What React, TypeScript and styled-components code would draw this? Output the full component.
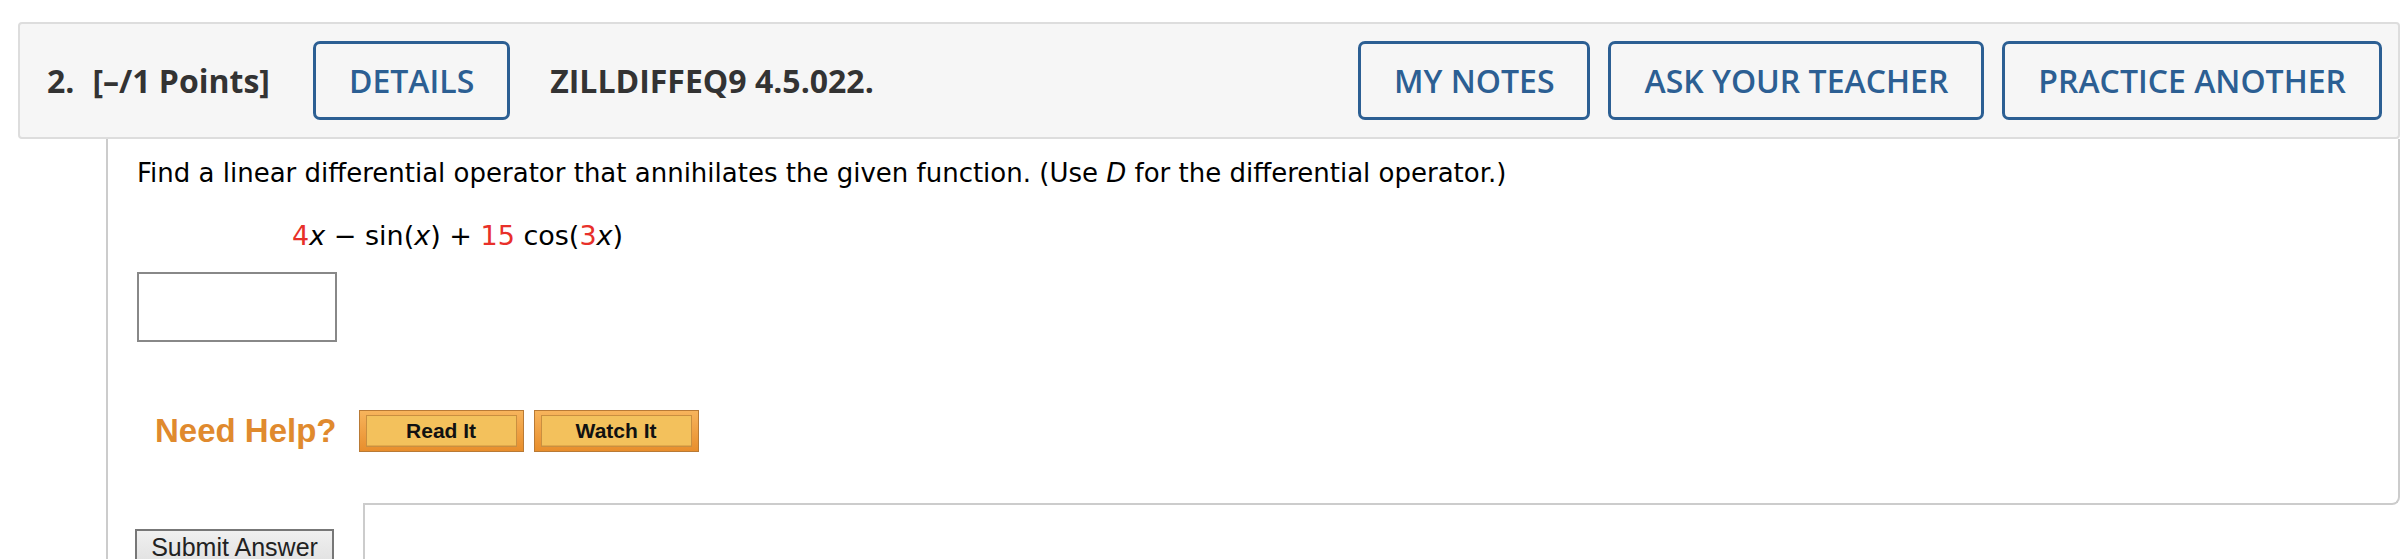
import styled, { createGlobalStyle } from 'styled-components';

const GlobalStyle = createGlobalStyle`
  body {
    margin: 0;
    background: #fff;
  }
`;

const Page = styled.div`
  padding: 22px 8px 0 18px;
  width: 2408px;
  height: 559px;
  box-sizing: border-box;
  overflow: hidden;
`;

const Header = styled.div`
  display: flex;
  align-items: center;
  height: 117px;
  box-sizing: border-box;
  padding: 0 16px 0 27px;
  background: #f6f6f6;
  border: 2px solid #dddddd;
  border-radius: 4px;
  font-family: "Open Sans", sans-serif;
`;

const Label = styled.span<{ $gap?: number }>`
  font-size: 32px;
  font-weight: 700;
  color: #333;
  margin-left: ${(p) => p.$gap ?? 0}px;
  white-space: nowrap;
`;

const OutlineButton = styled.button<{ $gap?: number }>`
  height: 79px;
  box-sizing: border-box;
  padding: 0 33px;
  margin-left: ${(p) => p.$gap ?? 0}px;
  background: transparent;
  border: 3px solid #2c5f93;
  border-radius: 7px;
  color: #2c5f93;
  font-family: "Open Sans", sans-serif;
  font-size: 32px;
  font-weight: 600;
  white-space: nowrap;
`;

const Spacer = styled.div`
  flex: 1;
`;

const Actions = styled.div`
  display: flex;
  gap: 18px;
`;

const Body = styled.div`
  margin-left: 88px;
  border-left: 2px solid #cccccc;
  display: flex;
  flex-direction: column;
`;

const Content = styled.div`
  border-right: 2px solid #cccccc;
  padding: 16px 0 0 29px;
  font-family: "DejaVu Sans", Verdana, sans-serif;
  font-size: 26px;
  color: #000;
`;

const Prompt = styled.p`
  margin: 0;
  line-height: 36px;
`;

const MathLine = styled.p`
  margin: 27px 0 0 155px;
  line-height: 36px;
  font-size: 27px;
`;

const Red = styled.span`
  color: #e8302a;
`;

const AnswerBox = styled.div`
  margin-top: 18px;
  width: 200px;
  height: 70px;
  box-sizing: border-box;
  border: 2px solid #888;
  background: #fff;
`;

const HelpRow = styled.div`
  display: flex;
  align-items: center;
  gap: 10px;
  margin: 68px 0 0 18px;
  padding-bottom: 43px;
`;

const HelpLabel = styled.span`
  font-family: "Liberation Sans", Arial, sans-serif;
  font-size: 33px;
  font-weight: 700;
  color: #e08a2e;
  margin-right: 12px;
`;

const HelpButton = styled.button`
  width: 165px;
  height: 42px;
  box-sizing: border-box;
  padding: 4px 6px;
  border: 1px solid #b97a35;
  background: linear-gradient(#f7b45c, #e88e2c);
  display: flex;
`;

const HelpInner = styled.span`
  flex: 1;
  display: flex;
  align-items: center;
  justify-content: center;
  background: #f3c15c;
  border: 1px solid #c98f40;
  box-shadow: inset 0 -1px 0 #e2a94a;
  font-family: "Liberation Sans", Arial, sans-serif;
  font-size: 21px;
  font-weight: 700;
  color: #111;
`;

const BottomEdge = styled.div`
  margin-left: 255px;
  height: 8px;
  border-right: 2px solid #cccccc;
  border-bottom: 2px solid #cccccc;
  border-bottom-right-radius: 8px;
`;

const SubmitRow = styled.div`
  display: flex;
`;

const SubmitCell = styled.div`
  width: 255px;
  padding: 24px 0 0 27px;
  box-sizing: border-box;
`;

const SubmitButton = styled.button`
  width: 199px;
  box-sizing: border-box;
  padding: 2px 0 8px;
  border: 2px solid #777;
  background: linear-gradient(#f0f0f0, #dedede);
  font-family: "Liberation Sans", Arial, sans-serif;
  font-size: 25px;
  line-height: 29px;
  color: #222;
`;

const AnswerArea = styled.div`
  flex: 1;
  height: 80px;
  border-left: 2px solid #cccccc;
`;

export default function App() {
  return (
    <Page>
      <GlobalStyle />
      <Header>
        <Label>2.</Label>
        <Label $gap={18}>[–/1 Points]</Label>
        <OutlineButton $gap={43}>DETAILS</OutlineButton>
        <Label $gap={40}>ZILLDIFFEQ9 4.5.022.</Label>
        <Spacer />
        <Actions>
          <OutlineButton>MY NOTES</OutlineButton>
          <OutlineButton>ASK YOUR TEACHER</OutlineButton>
          <OutlineButton>PRACTICE ANOTHER</OutlineButton>
        </Actions>
      </Header>
      <Body>
        <Content>
          <Prompt>
            Find a linear differential operator that annihilates the given function. (Use <i>D</i> for the
            differential operator.)
          </Prompt>
          <MathLine>
            <Red>4</Red><i>x</i> − sin(<i>x</i>) + <Red>15</Red> cos(<Red>3</Red><i>x</i>)
          </MathLine>
          <AnswerBox />
          <HelpRow>
            <HelpLabel>Need Help?</HelpLabel>
            <HelpButton><HelpInner>Read It</HelpInner></HelpButton>
            <HelpButton><HelpInner>Watch It</HelpInner></HelpButton>
          </HelpRow>
        </Content>
        <BottomEdge />
        <SubmitRow>
          <SubmitCell>
            <SubmitButton>Submit Answer</SubmitButton>
          </SubmitCell>
          <AnswerArea />
        </SubmitRow>
      </Body>
    </Page>
  );
}
